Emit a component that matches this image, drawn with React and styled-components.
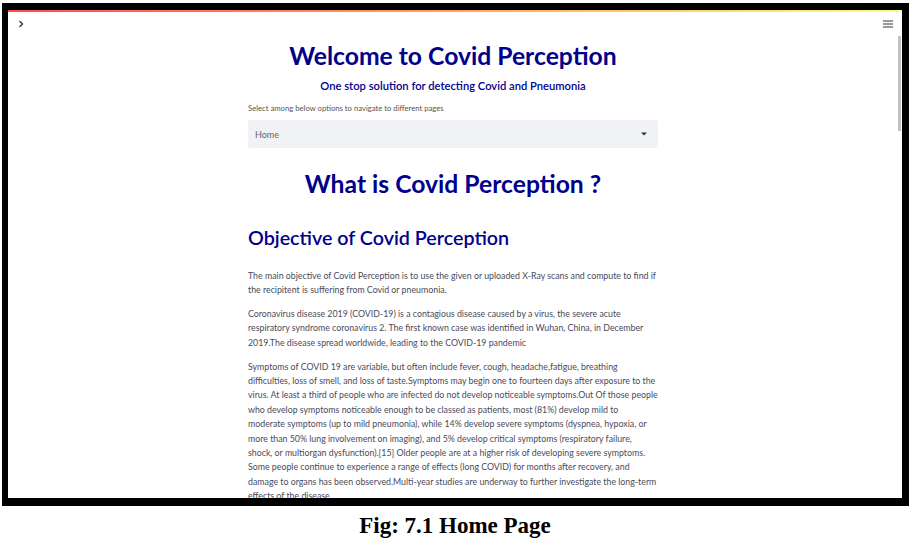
import React from "react";
import styled, { createGlobalStyle } from "styled-components";

const GlobalStyle = createGlobalStyle`
  html, body {
    margin: 0;
    padding: 0;
    background: #fff;
  }
`;

// each paragraph is a list of forced lines, so wrapping follows the screenshot
const paragraphs = [
  ["The main objective of Covid Perception is to use the given or uploaded X-Ray scans and compute to find if the recipitent is suffering from Covid or pneumonia."],
  ["Coronavirus disease 2019 (COVID-19) is a contagious disease caused by a virus, the severe acute respiratory syndrome coronavirus 2. The first known case was identified in Wuhan, China, in December 2019.The disease spread worldwide, leading to the COVID-19 pandemic"],
  [
    "Symptoms of COVID 19 are variable, but often include fever, cough, headache,fatigue, breathing difficulties, loss of smell, and loss of taste.Symptoms may begin one to fourteen days after exposure to the virus. At least a third of people who are infected do not develop noticeable symptoms.Out Of those people who develop symptoms noticeable enough to be classed as patients, most (81%) develop mild to",
    "moderate symptoms (up to mild pneumonia), while 14% develop severe symptoms (dyspnea, hypoxia, or more than 50% lung involvement on imaging), and 5% develop critical symptoms (respiratory failure, shock, or multiorgan dysfunction).[15] Older people are at a higher risk of developing severe symptoms. Some people continue to experience a range of effects (long COVID) for months after recovery, and damage to organs has been observed.Multi-year studies are underway to further investigate the long-term effects of the disease.",
  ],
];

function App() {
  return (
    <>
      <GlobalStyle />
      <Page>
        <Frame>
          <Decoration />
          <Body>
            <Main>
              <Header>
                <svg width="6" height="8" viewBox="0 0 6 8">
                  <path d="M1.5 1 L4.5 4 L1.5 7" fill="none" stroke="#31333f" strokeWidth="1.4" />
                </svg>
                <svg width="10" height="8" viewBox="0 0 10 8">
                  <path d="M0 1h10M0 4h10M0 7h10" stroke="#31333f" strokeWidth="1.2" />
                </svg>
              </Header>
              <Content>
                <Title>Welcome to Covid Perception</Title>
                <Subtitle>One stop solution for detecting Covid and Pneumonia</Subtitle>
                <Label>Select among below options to navigate to different pages</Label>
                <Select>
                  <span>Home</span>
                  <svg width="6" height="4" viewBox="0 0 6 4">
                    <path d="M0 0.5h6L3 3.5z" fill="#31333f" />
                  </svg>
                </Select>
                <Title $top={20}>What is Covid Perception ?</Title>
                <Heading>Objective of Covid Perception</Heading>
                {paragraphs.map((parts, i) => (
                  <Paragraph key={i}>
                    {parts.map((t, j) => (
                      <React.Fragment key={j}>
                        {j > 0 && <br />}
                        {t}
                      </React.Fragment>
                    ))}
                  </Paragraph>
                ))}
              </Content>
            </Main>
            <Track>
              <Thumb />
            </Track>
          </Body>
        </Frame>
        <Caption>Fig: 7.1 Home Page</Caption>
      </Page>
    </>
  );
}

const Page = styled.div`
  width: 910px;
  padding-top: 3px;
  display: flex;
  flex-direction: column;
  align-items: flex-start;
`;

const Frame = styled.div`
  margin-left: 2px;
  width: 894px;
  height: 488px;
  border-style: solid;
  border-color: #000;
  border-width: 7px 7px 8px 6px;
  background: #fff;
  display: flex;
  flex-direction: column;
  overflow: hidden;
`;

const Decoration = styled.div`
  height: 2px;
  flex-shrink: 0;
  background: linear-gradient(90deg, #ff4b4b, #fffd80);
`;

const Body = styled.div`
  flex: 1;
  display: flex;
  min-height: 0;
`;

const Main = styled.div`
  flex: 1;
  display: flex;
  flex-direction: column;
  min-width: 0;
`;

const Header = styled.div`
  height: 24px;
  flex-shrink: 0;
  display: flex;
  align-items: center;
  justify-content: space-between;
  padding: 0 5px 0 10px;
`;

const Track = styled.div`
  width: 4px;
  padding-top: 24px;
`;

const Thumb = styled.div`
  width: 3px;
  height: 95px;
  background: #c1c1c1;
`;

const Content = styled.div`
  width: 410px;
  margin: 0 auto;
  padding-top: 4px;
  font-family: Lato, "Liberation Sans", sans-serif;
  color: #31333f;
`;

const Title = styled.h1`
  margin: ${(p) => p.$top || 0}px 0 0;
  font-size: 24.7px;
  line-height: 32px;
  font-weight: 700;
  color: #00008b;
  text-align: center;
`;

const Subtitle = styled.h3`
  margin: 6px 0 0;
  font-size: 11.2px;
  line-height: 16px;
  font-weight: 600;
  color: #00008b;
  text-align: center;
`;

const Label = styled.div`
  margin-top: 8px;
  font-size: 7.7px;
  line-height: 12px;
  color: #555;
`;

const Select = styled.div`
  margin-top: 6px;
  height: 28px;
  border-radius: 3px;
  background: #f0f2f6;
  display: flex;
  align-items: center;
  justify-content: space-between;
  padding: 0 11px 0 7px;
  font-size: 9px;
  color: #666;
`;

const Heading = styled.h2`
  margin: 25px 0 0;
  font-size: 19.7px;
  line-height: 26px;
  font-weight: 600;
  color: #00008b;
`;

const Paragraph = styled.p`
  margin: 0 0 9.5px;
  font-size: 8.8px;
  line-height: 14.4px;
  color: #4a4a5a;
  &:first-of-type {
    margin-top: 17.5px;
  }
`;

const Caption = styled.div`
  align-self: center;
  margin-top: 8px;
  font-family: "Liberation Serif", serif;
  font-weight: 700;
  font-size: 23px;
  line-height: 24px;
  color: #000;
`;

export default App;
